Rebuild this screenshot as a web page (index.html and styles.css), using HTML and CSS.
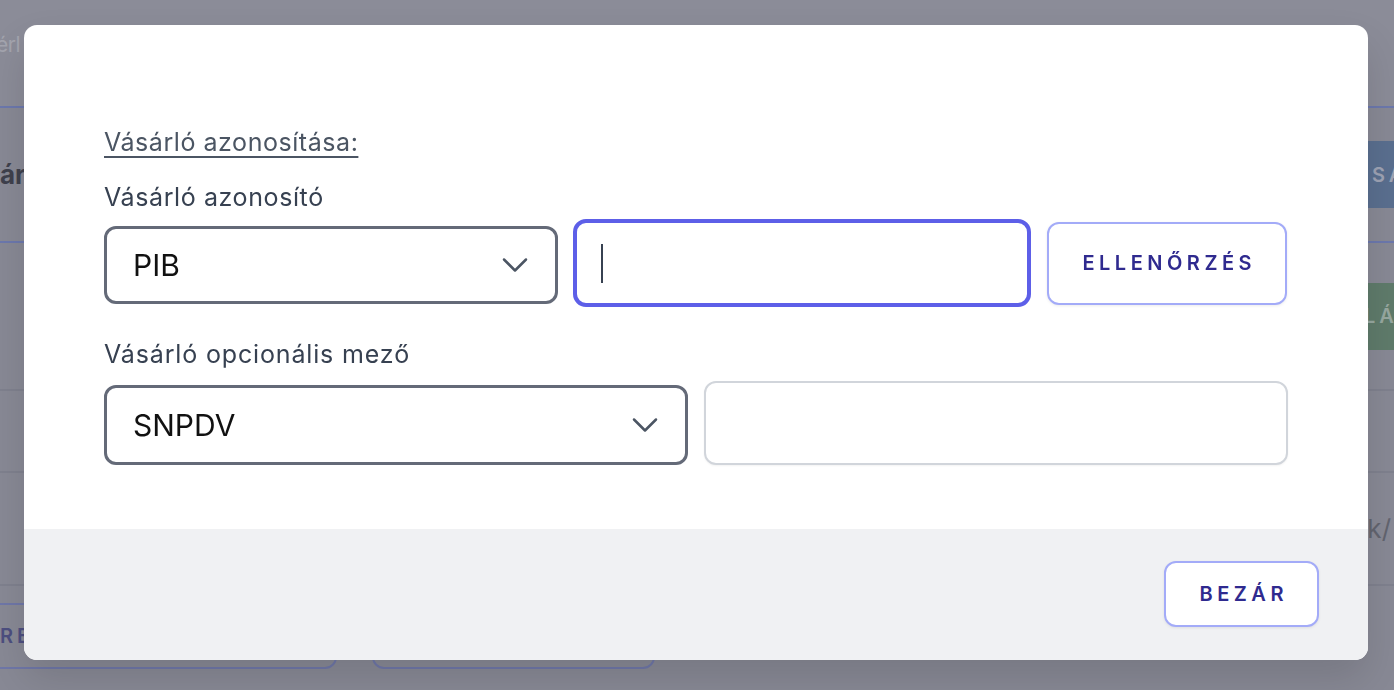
FILE: index.html
```html
<!DOCTYPE html>
<html lang="hu">
<head>
<meta charset="utf-8">
<link rel="stylesheet" href="styles.css">
</head>
<body>
<div class="page">
  <div class="bg-header"><span class="bg-crumb">érl</span></div>
  <div class="bg-row bg-row1">
    <span class="bg-title">ár</span>
    <span class="bg-btn bg-btn-blue">SA</span>
  </div>
  <div class="bg-row bg-row2">
    <span class="bg-btn bg-btn-green">LÁ</span>
  </div>
  <div class="bg-row bg-row3"></div>
  <div class="bg-row bg-row4"><span class="bg-text">k/</span></div>
  <div class="bg-row bg-row5">
    <span class="bg-outline bg-outline1">RE</span>
    <span class="bg-outline bg-outline2"></span>
  </div>
</div>

<div class="modal">
  <div class="modal-body">
    <div class="section-title">Vásárló azonosítása:</div>
    <div class="field-label">Vásárló azonosító</div>
    <div class="row row-id">
      <div class="select select-id">
        <span>PIB</span>
        <svg class="chev" width="26" height="16" viewBox="0 0 26 16"><path d="M2 2.5L13 13.5L24 2.5" fill="none" stroke="#4b5563" stroke-width="2.5" stroke-linecap="round" stroke-linejoin="round"/></svg>
      </div>
      <div class="input input-focus"><span class="caret"></span></div>
      <button class="btn btn-check">ELLENŐRZÉS</button>
    </div>
    <div class="field-label field-label2">Vásárló opcionális mező</div>
    <div class="row row-opt">
      <div class="select select-opt">
        <span>SNPDV</span>
        <svg class="chev" width="26" height="16" viewBox="0 0 26 16"><path d="M2 2.5L13 13.5L24 2.5" fill="none" stroke="#4b5563" stroke-width="2.5" stroke-linecap="round" stroke-linejoin="round"/></svg>
      </div>
      <div class="input input-plain"></div>
    </div>
  </div>
  <div class="modal-footer">
    <button class="btn btn-close">BEZÁR</button>
  </div>
</div>
</body>
</html>
```

FILE: styles.css
```css
* { box-sizing: border-box; }
html, body { margin: 0; padding: 0; }
body {
  width: 1394px;
  height: 690px;
  overflow: hidden;
  background: #898a96;
  font-family: Inter, "Noto Sans", "Liberation Sans", sans-serif;
}

/* background page (already dimmed by the overlay) */
.page { width: 1394px; height: 690px; overflow: hidden; }
.bg-header {
  height: 108px;
  border-bottom: 2px solid #6c78ad;
  background: #8b8c98;
  display: flex;
  align-items: flex-start;
  padding-top: 32px;
}
.bg-crumb {
  font-size: 21px;
  letter-spacing: -0.5px;
  color: #a3a4ae;
  margin-left: -4px;
  white-space: nowrap;
}
.bg-row {
  display: flex;
  align-items: center;
  border-bottom: 2px solid #7f818e;
  background: #888995;
}
.bg-row1 { height: 135px; border-bottom-color: #6c78ad; justify-content: space-between; }
.bg-title {
  font-size: 26px; font-weight: 700; color: #3f414d;
  margin-left: 0; white-space: nowrap;
}
.bg-btn {
  width: 100px;
  height: 67px; display: flex; align-items: center;
  font-size: 20px; font-weight: 600; letter-spacing: 4px; color: #9ea3b4; white-space: nowrap;
}
.bg-btn-blue { background: #5a6f8f; margin-right: -41px; padding-left: 37px; }
.bg-row2 { height: 148px; justify-content: flex-end; }
.bg-btn-green { background: #5f7b6b; margin-right: -41px; padding-left: 29px; color: #97a8a0; }
.bg-row3 { height: 82px; }
.bg-row4 { height: 113px; justify-content: flex-end; }
.bg-text { font-size: 26px; color: #62646f; margin-right: 3px; white-space: nowrap; }
.bg-row5 {
  height: 104px; border-bottom: none;
  align-items: flex-start;
  padding-top: 17px;
}
.bg-outline {
  height: 66px; border: 2px solid #6f77a8;
  border-radius: 12px;
  display: flex; align-items: center;
  font-size: 20px; font-weight: 600; letter-spacing: 4px; color: #4d4f80; white-space: nowrap;
}
.bg-outline1 { width: 360px; margin-left: -23px; padding-left: 21px; }
.bg-outline2 { width: 283px; margin-left: 35px; }

/* modal */
.modal {
  position: fixed;
  left: 24px;
  top: 25px;
  width: 1344px;
  height: 635px;
  background: #ffffff;
  border-radius: 13px;
  overflow: hidden;
  display: flex;
  flex-direction: column;
  box-shadow: 0 20px 40px rgba(0,0,0,0.12);
}
.modal-body {
  height: 504px;
  padding: 102px 80px 0 80px;
}
.section-title {
  font-size: 25px;
  line-height: 30px;
  letter-spacing: 0.55px;
  color: #4b5563;
  text-decoration: underline;
  text-underline-offset: 5px;
  text-decoration-thickness: 1.5px;
}
.field-label {
  margin-top: 25px;
  font-size: 25px;
  line-height: 30px;
  letter-spacing: 0.6px;
  color: #374151;
}
.field-label2 { margin-top: 32px; letter-spacing: 0.85px; }
.row { display: flex; }
.row-id { align-items: center; margin-top: 7px; height: 88px; }
.row-opt { align-items: flex-end; gap: 16px; margin-top: 12px; }

.select {
  display: flex;
  align-items: center;
  justify-content: space-between;
  border: 3px solid #646a78;
  border-radius: 12px;
  padding: 0 27px 0 26px;
  font-size: 30px;
  color: #111111;
  background: #fff;
}
.select-id { width: 454px; height: 78px; margin-top: 4px; margin-right: 15px; }
.select-opt { width: 584px; height: 80px; }
.chev { display: block; }

.input {
  border-radius: 12px;
  background: #fff;
}
.input-focus {
  width: 458px;
  height: 88px;
  margin-right: 16px;
  border: 4px solid #5d5fe8;
  border-radius: 13px;
  display: flex;
  align-items: center;
  padding-left: 24px;
}
.caret { width: 2px; height: 39px; background: #374151; }
.input-plain {
  width: 584px;
  height: 84px;
  border: 2px solid #d1d5db;
  box-shadow: 0 1px 2px rgba(0,0,0,0.05);
}

.btn {
  font-family: Inter, "Noto Sans", "Liberation Sans", sans-serif;
  background: #fff;
  border: 2px solid #a3abf8;
  border-radius: 12px;
  color: #2f2a8f;
  font-weight: 600;
  font-size: 20px;
  letter-spacing: 4.5px;
  box-shadow: 0 1px 3px rgba(0,0,0,0.08);
  padding: 0 0 0 4.5px;
  cursor: pointer;
}
.btn-check { width: 240px; height: 83px; }
.modal-footer {
  flex: 1;
  background: #f0f1f3;
  display: flex;
  align-items: center;
  justify-content: flex-end;
  padding-right: 49px;
}
.btn-close { width: 155px; height: 66px; margin-top: -2px; }
```
